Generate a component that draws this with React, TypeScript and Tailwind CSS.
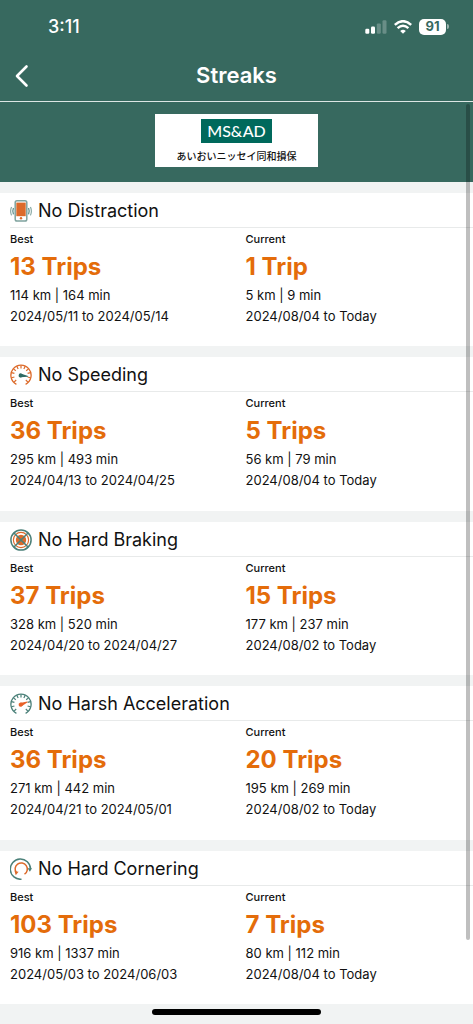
import React from 'react';

type Stat = {
  trips: string;
  distance: string;
  dates: string;
};

type Streak = {
  title: string;
  icon: React.ReactNode;
  best: Stat;
  current: Stat;
};

const GREEN = '#4b8079';
const ORANGE = '#dc6a2a';

const PhoneIcon = () => (
  <svg viewBox="0 0 22 22" className="size-[22px] shrink-0" fill="none" aria-hidden="true">
    <rect x="5.2" y="0.8" width="11.6" height="20.2" rx="1.8" fill="#fff" stroke="#7fa39e" strokeWidth="1.5" />
    <rect x="6.3" y="2.6" width="9.4" height="13.6" fill={ORANGE} />
    <circle cx="11" cy="18.3" r="1.2" fill={ORANGE} />
    <path d="M3.4 8 Q2.2 11.2 3.4 14.4 M18.6 8 Q19.8 11.2 18.6 14.4" stroke={GREEN} strokeWidth="1.1" />
    <path d="M1.5 7 Q-0.2 11.2 1.5 15.4 M20.5 7 Q22.2 11.2 20.5 15.4" stroke="#7fa39e" strokeWidth="1.1" />
  </svg>
);

const GaugeIcon = ({ dial, needle, tilt }: { dial: string; needle: string; tilt: number }) => (
  <svg viewBox="0 0 22 22" className="size-[22px] shrink-0" fill="none" aria-hidden="true">
    <path d="M6.4 20.3 A10.1 10.1 0 1 1 15.6 20.3" stroke={dial} strokeWidth="1.3" />
    {[-135, -105, -75, -50, -25, 0, 25, 50, 75, 105, 135].map((angle) => (
      <path key={angle} d="M11 1.4 V4.4" stroke={dial} strokeWidth="1.2" transform={`rotate(${angle} 11 11.2)`} />
    ))}
    <g transform={`rotate(${tilt} 11 11.5)`}>
      <circle cx="10.7" cy="11.5" r="2.1" fill={needle} />
      <path d="M10.5 9.6 L18 11.1 V11.9 L10.5 13.4 Z" fill={needle} />
    </g>
  </svg>
);

const BrakeIcon = () => (
  <svg viewBox="0 0 22 22" className="size-[22px] shrink-0" fill="none" aria-hidden="true">
    <circle cx="11" cy="11" r="10.1" stroke={GREEN} strokeWidth="1.5" />
    <circle cx="11" cy="11" r="7.6" stroke={ORANGE} strokeWidth="1.2" />
    <circle cx="11" cy="11" r="5.2" fill={ORANGE} />
    <path d="M4 4 L18 18 M18 4 L4 18" stroke={GREEN} strokeWidth="1.5" />
  </svg>
);

const CornerIcon = () => (
  <svg viewBox="0 0 22 22" className="size-[22px] shrink-0" fill="none" aria-hidden="true">
    <path d="M11.5 21.2 A10.1 10.1 0 1 1 20.5 11" stroke={GREEN} strokeWidth="1.5" />
    <path d="M17.6 10.2 H22 L19.9 13.8 Z" fill={GREEN} />
    <path d="M6.4 14.8 A6.1 6.1 0 1 1 14.5 16.2" stroke={ORANGE} strokeWidth="1.5" />
    <path d="M4.6 13.2 L8.6 13.8 L5.7 17.2 Z" fill={ORANGE} />
  </svg>
);

const streaks: Streak[] = [
  {
    title: 'No Distraction',
    icon: <PhoneIcon />,
    best: { trips: '13 Trips', distance: '114 km | 164 min', dates: '2024/05/11 to 2024/05/14' },
    current: { trips: '1 Trip', distance: '5 km | 9 min', dates: '2024/08/04 to Today' },
  },
  {
    title: 'No Speeding',
    icon: <GaugeIcon dial={ORANGE} needle="#2f6b64" tilt={8} />,
    best: { trips: '36 Trips', distance: '295 km | 493 min', dates: '2024/04/13 to 2024/04/25' },
    current: { trips: '5 Trips', distance: '56 km | 79 min', dates: '2024/08/04 to Today' },
  },
  {
    title: 'No Hard Braking',
    icon: <BrakeIcon />,
    best: { trips: '37 Trips', distance: '328 km | 520 min', dates: '2024/04/20 to 2024/04/27' },
    current: { trips: '15 Trips', distance: '177 km | 237 min', dates: '2024/08/02 to Today' },
  },
  {
    title: 'No Harsh Acceleration',
    icon: <GaugeIcon dial={GREEN} needle="#e8622a" tilt={-22} />,
    best: { trips: '36 Trips', distance: '271 km | 442 min', dates: '2024/04/21 to 2024/05/01' },
    current: { trips: '20 Trips', distance: '195 km | 269 min', dates: '2024/08/02 to Today' },
  },
  {
    title: 'No Hard Cornering',
    icon: <CornerIcon />,
    best: { trips: '103 Trips', distance: '916 km | 1337 min', dates: '2024/05/03 to 2024/06/03' },
    current: { trips: '7 Trips', distance: '80 km | 112 min', dates: '2024/08/04 to Today' },
  },
];

const StatusBar = () => (
  <div className="flex h-[52px] items-center justify-between pl-12 pr-6 pt-px text-white">
    <span className="text-lg font-medium">3:11</span>
    <div className="flex items-center gap-[7px]">
      <svg viewBox="0 0 22 14" className="h-[14px] w-[22px]" fill="#fff" aria-hidden="true">
        <rect x="0.3" y="8.8" width="4" height="5" rx="1.2" />
        <rect x="6" y="6.6" width="4" height="7.2" rx="1.2" />
        <rect x="11.8" y="3.4" width="4" height="10.4" rx="1.2" opacity="0.25" />
        <rect x="17.5" y="0.2" width="4" height="13.6" rx="1.2" opacity="0.25" />
      </svg>
      <svg viewBox="0 0 18 14" className="h-[14px] w-[18px]" fill="none" stroke="#fff" aria-hidden="true">
        <path d="M0.8 4.9 Q9 -2.5 17.2 4.9" strokeWidth="2.5" />
        <path d="M3.6 8.2 Q9 3.2 14.4 8.2" strokeWidth="2.4" />
        <path d="M9 13.7 L6.2 10.9 Q9 8.6 11.8 10.9 Z" fill="#fff" stroke="none" />
      </svg>
      <div className="flex items-center gap-px">
        <span className="flex h-4 w-[27px] items-center justify-center rounded-[5px] bg-white text-[13px] font-bold text-[#37695f]">
          91
        </span>
        <span className="h-[5px] w-[2px] rounded-r-full bg-white/50"></span>
      </div>
    </div>
  </div>
);

const StatColumn = ({ label, stat }: { label: string; stat: Stat }) => (
  <div>
    <h3 className="text-[11px] font-medium leading-5">{label}</h3>
    <p className="text-2xl font-bold leading-9 text-[#e46c0a]">{stat.trips}</p>
    <p className="text-[13px] leading-[21px]">{stat.distance}</p>
    <p className="text-[13px] leading-[21px]">{stat.dates}</p>
  </div>
);

const StreakCard = ({ streak }: { streak: Streak }) => (
  <section className="flex-1 bg-white pl-[10px]">
    <div className="flex h-[35px] items-center gap-[6px] border-b border-[#e8eaea] pt-[2px]">
      {streak.icon}
      <h2 className="text-lg">{streak.title}</h2>
    </div>
    <div className="grid grid-cols-2 gap-2 pt-px">
      <StatColumn label="Best" stat={streak.best} />
      <StatColumn label="Current" stat={streak.current} />
    </div>
  </section>
);

const App = () => {
  return (
    <div className="flex min-h-screen flex-col bg-[#f1f3f3] font-['Inter','Noto_Sans_CJK_JP',sans-serif] text-[#111]">
      <header className="border-b border-[#dce6e4] bg-[#37695f]">
        <StatusBar />
        <div className="grid h-[49px] grid-cols-[48px_1fr_48px] items-center pb-[2px] text-white">
          <button type="button" aria-label="Back" className="pl-[14px]">
            <svg viewBox="0 0 16 24" className="h-6 w-4" fill="none" aria-hidden="true">
              <path d="M12.5 2.5 L3 12 L12.5 21.5" stroke="#fff" strokeWidth="2.6" strokeLinecap="round" strokeLinejoin="round" />
            </svg>
          </button>
          <h1 className="text-center text-[22px] font-semibold">Streaks</h1>
        </div>
      </header>

      <main className="relative flex flex-1 flex-col">
        <div className="flex h-20 items-start justify-center bg-[#37695f] pt-3">
          <div className="flex h-[53px] w-[163px] flex-col items-center bg-white pt-[5px]">
            <span className="flex h-6 w-[71px] items-center justify-center bg-[#00695c] font-['Lato',sans-serif] text-base font-medium text-white">
              MS&amp;AD
            </span>
            <span className="pt-[3px] text-[10px] font-medium leading-5">あいおいニッセイ同和損保</span>
          </div>
        </div>

        <div className="flex flex-1 flex-col gap-[11px] pt-[11px]">
          {streaks.map((streak) => (
            <StreakCard key={streak.title} streak={streak} />
          ))}
        </div>

        {/* scroll indicator */}
        <div className="absolute bottom-16 right-[3px] top-[2px] w-1 rounded-full bg-black/25"></div>
      </main>

      <footer className="flex h-5 items-start justify-center pt-[5px]">
        <div className="h-[6px] w-[169px] rounded-full bg-black"></div>
      </footer>
    </div>
  );
};

export default App;
